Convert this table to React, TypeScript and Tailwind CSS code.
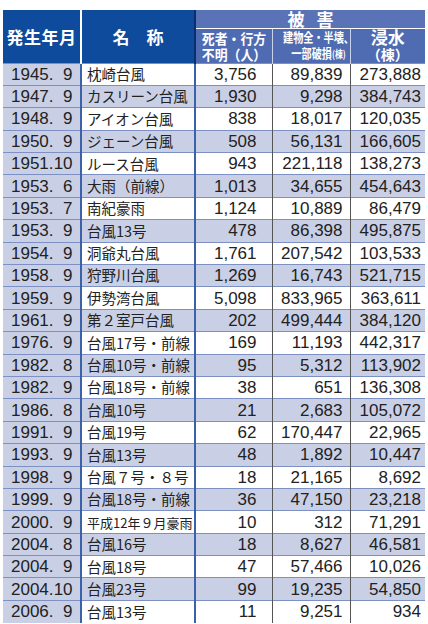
const rows: [string, string, string, string, string, string][] = [
  ["1945", "9", "枕崎台風", "3,756", "89,839", "273,888"],
  ["1947", "9", "カスリーン台風", "1,930", "9,298", "384,743"],
  ["1948", "9", "アイオン台風", "838", "18,017", "120,035"],
  ["1950", "9", "ジェーン台風", "508", "56,131", "166,605"],
  ["1951", "10", "ルース台風", "943", "221,118", "138,273"],
  ["1953", "6", "大雨（前線）", "1,013", "34,655", "454,643"],
  ["1953", "7", "南紀豪雨", "1,124", "10,889", "86,479"],
  ["1953", "9", "台風13号", "478", "86,398", "495,875"],
  ["1954", "9", "洞爺丸台風", "1,761", "207,542", "103,533"],
  ["1958", "9", "狩野川台風", "1,269", "16,743", "521,715"],
  ["1959", "9", "伊勢湾台風", "5,098", "833,965", "363,611"],
  ["1961", "9", "第２室戸台風", "202", "499,444", "384,120"],
  ["1976", "9", "台風17号・前線", "169", "11,193", "442,317"],
  ["1982", "8", "台風10号・前線", "95", "5,312", "113,902"],
  ["1982", "9", "台風18号・前線", "38", "651", "136,308"],
  ["1986", "8", "台風10号", "21", "2,683", "105,072"],
  ["1991", "9", "台風19号", "62", "170,447", "22,965"],
  ["1993", "9", "台風13号", "48", "1,892", "10,447"],
  ["1998", "9", "台風７号・８号", "18", "21,165", "8,692"],
  ["1999", "9", "台風18号・前線", "36", "47,150", "23,218"],
  ["2000", "9", "平成12年９月豪雨", "10", "312", "71,291"],
  ["2004", "8", "台風16号", "18", "8,627", "46,581"],
  ["2004", "9", "台風18号", "47", "57,466", "10,026"],
  ["2004", "10", "台風23号", "99", "19,235", "54,850"],
  ["2006", "9", "台風13号", "11", "9,251", "934"],
];

const jp = "font-['Noto_Sans_CJK_JP',sans-serif]";
const num = "font-['Liberation_Sans','Noto_Sans_CJK_JP',sans-serif]";

export default function App() {
  return (
    <div className="w-[428px] h-[624px] overflow-hidden bg-white pt-[10px] pl-[3px]">
      <table className="w-[422px] border-collapse table-fixed text-[#222]">
        <colgroup>
          <col className="w-[78px]" />
          <col className="w-[114px]" />
          <col className="w-[77px]" />
          <col className="w-[78px]" />
          <col className="w-[75px]" />
        </colgroup>
        <thead className={jp}>
          <tr className="h-[18px]">
            <th
              rowSpan={2}
              className="bg-[#0f4b9c] text-white text-[17px] font-bold border-r-2 border-r-white leading-none tracking-[0.5px]"
            >
              発生年月
            </th>
            <th
              rowSpan={2}
              className="bg-[#0f4b9c] text-white text-[17px] font-bold border-r-2 border-r-[#0a2f6a] leading-none"
            >
              名　称
            </th>
            <th
              colSpan={3}
              className="bg-[#5a73b6] text-white text-[17px] font-bold leading-[17px] border-b border-b-white tracking-[12px] pl-[12px]"
            >
              被害
            </th>
          </tr>
          <tr className="h-[35px]">
            <th className="bg-[#4f6bb2] text-white text-[14px] font-bold leading-[16px] border-r border-r-[#c9d2ea] p-0">
              <span className="inline-block scale-x-[0.92] whitespace-nowrap">
                死者・行方
                <br />
                不明（人）
              </span>
            </th>
            <th className="bg-[#4f6bb2] text-white text-[13px] font-bold leading-[16px] border-r border-r-[#c9d2ea] p-0">
              <span className="inline-block scale-x-[0.78] whitespace-nowrap">
                建物全・半壊、
                <br />
                一部破損<span className="text-[10px]">(棟)</span>
              </span>
            </th>
            <th className="bg-[#4f6bb2] text-white text-[17px] font-bold leading-[16px] p-0">
              浸水
              <br />
              <span className="text-[14px]">（棟）</span>
            </th>
          </tr>
        </thead>
        <tbody>
          {rows.map((r, i) => {
            const band = i % 2 === 1 ? "bg-[#c9d0e6]" : "bg-white";
            return (
              <tr key={i} className="h-[22.4px] border-t border-t-[#7d90c3]">
                <td
                  className={`${num} bg-[#c9d0e6] text-[17px] leading-none border-r-2 border-r-[#3b62a8] pl-[8px] whitespace-nowrap`}
                >
                  {r[0]}.<span className="inline-block w-[19px] text-right">{r[1]}</span>
                </td>
                <td
                  className={`${jp} ${band} ${r[2].length > 8 ? "text-[13px]" : "text-[14.5px]"} leading-none border-r-2 border-r-[#3b62a8] pl-[5px] whitespace-nowrap overflow-hidden`}
                >
                  {r[2]}
                </td>
                <td
                  className={`${num} ${band} text-[17px] leading-none text-right pr-[15px] border-r border-r-[#555]`}
                >
                  {r[3]}
                </td>
                <td
                  className={`${num} ${band} text-[17px] leading-none text-right pr-[7px] border-r border-r-[#555]`}
                >
                  {r[4]}
                </td>
                <td className={`${num} ${band} text-[17px] leading-none text-right pr-[4px]`}>
                  {r[5]}
                </td>
              </tr>
            );
          })}
        </tbody>
      </table>
    </div>
  );
}
